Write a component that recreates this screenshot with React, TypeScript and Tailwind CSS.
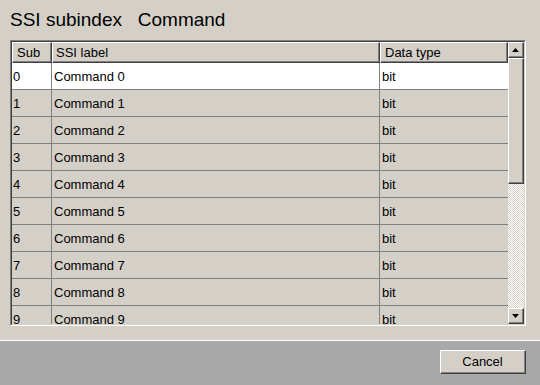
import React from 'react';

const rows = Array.from({ length: 10 }, (_, i) => ({ sub: String(i), label: `Command ${i}`, type: 'bit' }));

function Raised({ className, children }: { className?: string; children?: React.ReactNode }) {
  // classic win32 raised bevel: outer black/white, inner grey
  return (
    <div className={`border-t border-l border-t-[#ffffff] border-l-[#ffffff] border-b border-r border-b-[#404040] border-r-[#404040] ${className ?? ''}`}>
      <div className="w-full h-full border-b border-r border-b-[#808080] border-r-[#808080] bg-[#d4d0c8] flex items-center justify-center">
        {children}
      </div>
    </div>
  );
}

function Arrow({ up }: { up?: boolean }) {
  return (
    <svg width="7" height="4" viewBox="0 0 7 4" aria-hidden="true">
      {up ? <path d="M3.5 0 L7 4 L0 4 Z" fill="#000" /> : <path d="M0 0 L7 0 L3.5 4 Z" fill="#000" />}
    </svg>
  );
}

export default function App() {
  return (
    <div className="w-[540px] h-[385px] bg-[#d4d0c8] flex flex-col font-['Liberation_Sans',Arial,sans-serif] text-black overflow-hidden">
      {/* title */}
      <div className="h-[40px] pt-[10px] pl-[10px] text-[19px] leading-[20px] whitespace-pre">SSI subindex   Command</div>

      {/* sunken list frame */}
      <div className="mx-[14px] ml-[10px] h-[286px] border-t border-l border-t-[#808080] border-l-[#808080] border-b border-r border-b-white border-r-white">
        <div className="h-full flex border-t border-l border-t-[#404040] border-l-[#404040] border-b border-r border-b-[#d4d0c8] border-r-[#d4d0c8]">
          {/* grid */}
          <div className="w-[496px] h-full flex flex-col overflow-hidden text-[13px]">
            <div className="flex h-[21px] shrink-0">
              <Raised className="w-[40px] h-full">
                <span className="w-full pl-[4px] pt-[1px] text-left">Sub</span>
              </Raised>
              <Raised className="w-[328px] h-full">
                <span className="w-full pl-[3px] pt-[1px] text-left">SSI label</span>
              </Raised>
              <Raised className="w-[128px] h-full">
                <span className="w-full pl-[4px] pt-[1px] text-left">Data type</span>
              </Raised>
            </div>
            {rows.map((r, i) => (
              <div key={r.sub} className={`flex h-[27px] shrink-0 pt-[2px] border-b border-[#808080] ${i === 0 ? 'bg-white' : 'bg-[#d4d0c8]'}`}>
                <div className="w-[40px] pl-[1px] flex items-center border-r border-[#808080] -mt-[2px] pt-[2px]">{r.sub}</div>
                <div className="w-[328px] pl-[2px] flex items-center border-r border-[#808080] -mt-[2px] pt-[2px]">{r.label}</div>
                <div className="flex-1 pl-[2px] flex items-center">{r.type}</div>
              </div>
            ))}
          </div>

          {/* vertical scrollbar */}
          <div className="w-[16px] h-full flex flex-col bg-[repeating-conic-gradient(#ffffff_0%_25%,#d4d0c8_0%_50%)] bg-[length:2px_2px]">
            <Raised className="h-[16px] shrink-0">
              <Arrow up />
            </Raised>
            <Raised className="h-[126px] shrink-0" />
            <div className="flex-1" />
            <Raised className="h-[16px] shrink-0">
              <Arrow />
            </Raised>
          </div>
        </div>
      </div>

      {/* footer */}
      <div className="mt-[14px] flex-1 border-t border-white bg-[#a9a9a9] flex justify-end items-start pt-[9px] pr-[14px]">
        <Raised className="w-[86px] h-[24px]">
          <span className="text-[13px] pt-[1px]">Cancel</span>
        </Raised>
      </div>
    </div>
  );
}
